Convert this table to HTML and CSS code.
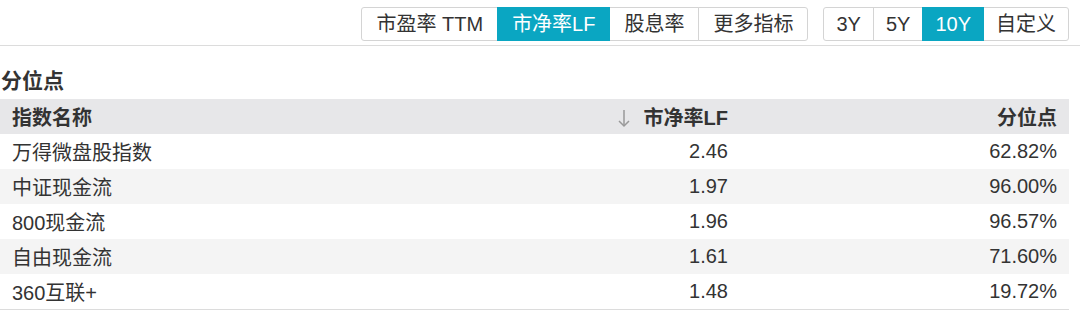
FILE: index.html
```html
<!DOCTYPE html>
<html>
<head>
    <title>分位点</title>
    <link rel="stylesheet" href="styles.css">
</head>
<body>
    <!-- Toolbar -->
    <div class="toolbar">
        <div class="btn-group metric-group">
            <button class="btn">市盈率 TTM</button>
            <button class="btn active">市净率LF</button>
            <button class="btn">股息率</button>
            <button class="btn">更多指标</button>
        </div>
        <div class="btn-group range-group">
            <button class="btn">3Y</button>
            <button class="btn">5Y</button>
            <button class="btn active">10Y</button>
            <button class="btn">自定义</button>
        </div>
    </div>

    <h2 class="section-title">分位点</h2>

    <!-- Table -->
    <table class="data-table">
        <colgroup>
            <col class="col-w1">
            <col class="col-w2">
            <col class="col-w3">
        </colgroup>
        <thead>
            <tr>
                <th>指数名称</th>
                <th class="col-num">
                    <svg class="sort-arrow" viewBox="0 0 12 20" fill="none" stroke="currentColor" stroke-width="1.5">
                        <line x1="6" y1="2" x2="6" y2="18"></line>
                        <polyline points="1 13 6 18 11 13"></polyline>
                    </svg>市净率LF
                </th>
                <th class="col-num">分位点</th>
            </tr>
        </thead>
        <tbody>
            <tr><td>万得微盘股指数</td><td class="col-num">2.46</td><td class="col-num">62.82%</td></tr>
            <tr><td>中证现金流</td><td class="col-num">1.97</td><td class="col-num">96.00%</td></tr>
            <tr><td>800现金流</td><td class="col-num">1.96</td><td class="col-num">96.57%</td></tr>
            <tr><td>自由现金流</td><td class="col-num">1.61</td><td class="col-num">71.60%</td></tr>
            <tr><td>360互联+</td><td class="col-num">1.48</td><td class="col-num">19.72%</td></tr>
        </tbody>
    </table>
</body>
</html>
```

FILE: styles.css
```css
body {
    margin: 0;
    background: #fff;
    color: #333;
    font-family: "Liberation Sans", "Noto Sans CJK SC", sans-serif;
}

.toolbar {
    display: flex;
    justify-content: flex-end;
    gap: 15px;
    padding: 7px 11px 4px 0;
    border-bottom: 1px solid #dcdcdc;
}

.btn-group {
    display: flex;
}

.btn {
    height: 34px;
    padding: 0 14px;
    margin-left: -1px;
    border: 1px solid #d4d4d4;
    background: #fff;
    color: #333;
    font-family: inherit;
    font-size: 20px;
    line-height: 32px;
    cursor: pointer;
}

.range-group .btn {
    padding: 0 12px;
}

.btn:first-child {
    margin-left: 0;
    border-radius: 3px 0 0 3px;
}

.btn:last-child {
    border-radius: 0 3px 3px 0;
}

.btn.active {
    background: #0aa6c2;
    border-color: #0aa6c2;
    color: #fff;
    position: relative;
}

.section-title {
    margin: 0;
    padding: 21px 0 0 1px;
    height: 32px;
    font-size: 21px;
    line-height: 28px;
    font-weight: bold;
    color: #333;
}

.data-table {
    width: 1069px;
    table-layout: fixed;
    border-collapse: collapse;
    font-size: 20px;
}

.col-w1 {
    width: 470px;
}

.col-w2 {
    width: 270px;
}

.data-table th,
.data-table td {
    height: 35px;
    padding: 0 12px;
    text-align: left;
    white-space: nowrap;
}

.data-table th {
    background: #e7e7e9;
    font-weight: bold;
    color: #333;
}

.data-table .col-num {
    text-align: right;
}

.data-table tbody tr:nth-child(even) td {
    background: #f4f4f4;
}

.data-table tbody tr:last-child td {
    border-bottom: 1px solid #dcdcdc;
}

.sort-arrow {
    width: 12px;
    height: 20px;
    margin-right: 14px;
    vertical-align: -3px;
    color: #999;
}
```
